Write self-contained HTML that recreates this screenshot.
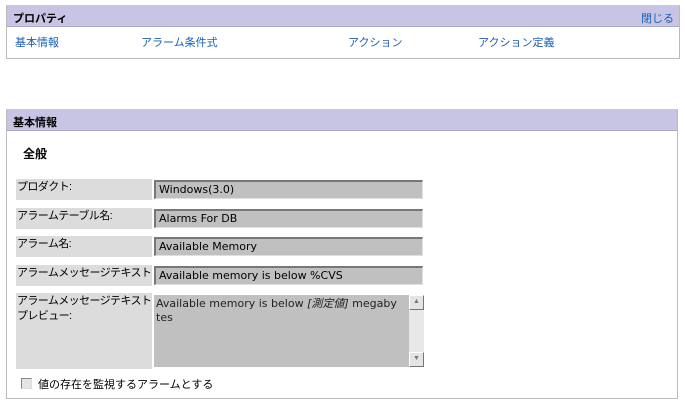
<!DOCTYPE html>
<html><head><meta charset="utf-8"><style>
*{margin:0;padding:0;box-sizing:border-box}
body{width:685px;height:405px;background:#fff;font-family:"Liberation Sans","Noto Sans CJK JP",sans-serif;font-size:11px;color:#000;position:relative;overflow:hidden}
.abs{position:absolute;white-space:nowrap}
.panel{position:absolute;border:1px solid #bbb;border-top-color:#ccc;background:#fff}
.hdr{position:absolute;left:0;right:0;top:0;height:21px;background:#c8c4e4;border-bottom:1px solid #a9a6c8;font-weight:bold;font-size:11px;padding:4px 0 0 6px}
a{color:#1a5fb4;text-decoration:none}
.lab{position:absolute;left:16px;width:136px;background:#dcdcdc;padding:1px 1px;font-size:11px;line-height:15px;white-space:nowrap;letter-spacing:-0.6px;overflow:hidden}
.inp{position:absolute;left:154px;width:269px;height:19px;background:#c0c0c0;border-top:2px solid #777;border-left:2px solid #777;border-right:1px solid #e0e0e0;border-bottom:1px solid #e0e0e0;padding:1px 3px;font-family:"DejaVu Sans","Noto Sans CJK JP",sans-serif;font-size:11px;line-height:14px;white-space:nowrap}
</style></head><body>
<div class="panel" style="left:6px;top:5px;width:674px;height:54px">
 <div class="hdr">プロパティ<a style="position:absolute;right:5px;top:4px;font-weight:normal">閉じる</a></div>
 <a class="abs" style="left:8px;top:28px">基本情報</a>
 <a class="abs" style="left:134px;top:28px">アラーム条件式</a>
 <a class="abs" style="left:341px;top:28px">アクション</a>
 <a class="abs" style="left:471px;top:28px">アクション定義</a>
</div>
<div class="panel" style="left:6px;top:109px;width:672px;height:290px">
 <div class="hdr">基本情報</div>
</div>
<div class="abs" style="left:23px;top:145px;font-weight:bold;font-size:12px">全般</div>
<div class="lab" style="top:179px;height:21px">プロダクト:</div>
<div class="inp" style="top:180px">Windows(3.0)</div>
<div class="lab" style="top:208px;height:21px">アラームテーブル名:</div>
<div class="inp" style="top:209px">Alarms For DB</div>
<div class="lab" style="top:236px;height:21px">アラーム名:</div>
<div class="inp" style="top:237px">Available Memory</div>
<div class="lab" style="top:265px;height:21px">アラームメッセージテキスト:</div>
<div class="inp" style="top:266px">Available memory is below %CVS</div>
<div class="lab" style="top:293px;height:76px">アラームメッセージテキスト<br>プレビュー:</div>
<div class="abs" style="left:154px;top:295px;width:270px;height:72px;background:#c0c0c0;padding:2px 2px;font-family:'DejaVu Sans','Noto Sans CJK JP',sans-serif;font-size:11px;line-height:14px;color:#222">Available memory is below <i>[測定値]</i> megaby<br>tes</div>
<div class="abs" style="left:409px;top:295px;width:15px;height:72px;background:#e8e8e8"></div>
<div class="abs" style="left:409px;top:295px;width:15px;height:15px;background:#e4e4e4;border:1px solid #fff;border-right-color:#777;border-bottom-color:#777;font-size:7px;text-align:center;line-height:12px;color:#777">▲</div>
<div class="abs" style="left:409px;top:352px;width:15px;height:15px;background:#e4e4e4;border:1px solid #fff;border-right-color:#777;border-bottom-color:#777;font-size:7px;text-align:center;line-height:12px;color:#777">▼</div>
<div class="abs" style="left:21px;top:378px;width:11px;height:11px;background:#e4e4e4;border:1px solid #888;border-right-color:#ddd;border-bottom-color:#ddd"></div>
<div class="abs" style="left:38px;top:376px;font-size:11px">値の存在を監視するアラームとする</div>
</body></html>
